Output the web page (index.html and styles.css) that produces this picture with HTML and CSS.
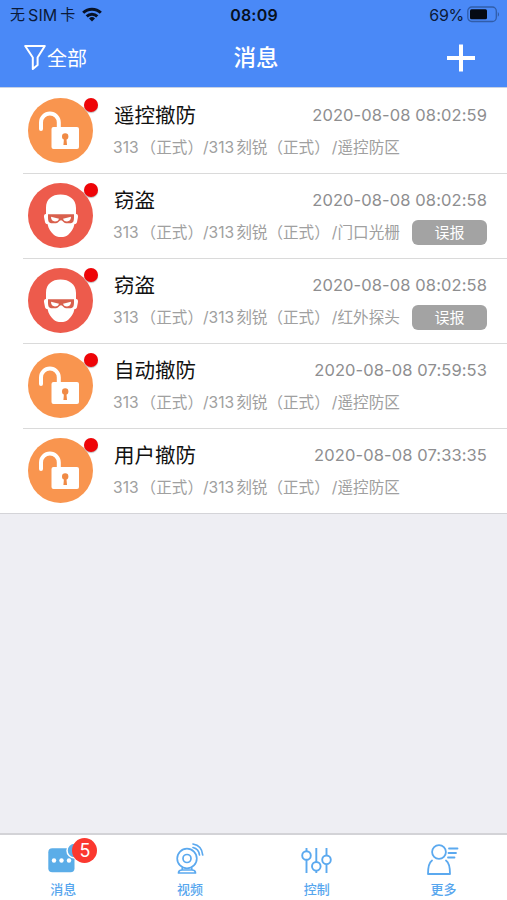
FILE: index.html
```html
<!DOCTYPE html>
<html lang="zh-CN">
<head>
<meta charset="utf-8">
<title>消息</title>
<link rel="stylesheet" href="styles.css">
</head>
<body>
<svg class="defs" width="0" height="0">
  <symbol id="unlock" viewBox="0 0 65 65">
    <circle cx="32.5" cy="32.5" r="32.5" fill="#f9954f"/>
    <path d="M13 31V24.500a8.900 8.900 0 0 1 17.800 0V31" fill="none" stroke="#fff" stroke-width="4" stroke-linecap="round"/>
    <rect x="23.500" y="29" width="27.500" height="22" rx="2" fill="#fff"/>
    <circle cx="37.200" cy="38.500" r="3.200" fill="#f08a45"/>
    <path d="M36.200 38h2l.8 9h-3.600z" fill="#f08a45"/>
  </symbol>
  <symbol id="thief" viewBox="0 0 65 65">
    <circle cx="32.5" cy="32.500" r="32.500" fill="#ed5b4c"/>
    <path d="M18 31V25C18 16 24 11.500 32.500 11.500S48 16 48 25v6c2 0 2.300 2 1.800 4l-.8 4c-.4 1.500-1 2-2.500 2-1 5-3.500 8-6 10.500C38.500 53.500 36 54 33 54s-5.500-.5-7.500-2.500C23 49 20.500 46 19.500 41c-1.500 0-2.100-.5-2.500-2l-.8-4C15.700 33 16 31 18 31z" fill="#fff"/>
    <path d="M20 31.300h26v3c0 4.500-1 6-4.500 6H38c-2.500 0-3-3-5-3s-2.500 3-5 3h-3.500c-3.500 0-4.500-1.500-4.500-6z" fill="#d9604d"/>
    <path d="M23 33.800l8 2c-1 2.300-2 2.600-4 2.600-2.500 0-4-1.500-4-4.600zM43 33.800l-8 2c1 2.300 2 2.600 4 2.600 2.500 0 4-1.500 4-4.600z" fill="#fff"/>
  </symbol>
</svg>
<div class="app">
  <header class="header">
    <div class="status">
      <div class="carrier"><span>无</span><span class="sim">SIM</span><span>卡</span>
        <svg class="wifi" width="20" height="15" viewBox="0 0 20 15" fill="none" stroke="#081226" stroke-width="3">
          <path d="M1.200 5.800a12.600 12.600 0 0 1 17.600 0"/><path d="M4.700 9.300a7.600 7.600 0 0 1 10.600 0"/>
          <path d="M10 14.500l-3-3a4.300 4.300 0 0 1 6 0z" fill="#081226" stroke="none"/>
        </svg>
      </div>
      <div class="clock">08:09</div>
      <div class="power"><span>69%</span>
        <svg width="33" height="17" viewBox="0 0 33 17">
          <rect x=".8" y="1" width="28.500" height="14.500" rx="4" fill="none" stroke="#315da9" stroke-width="1.300"/>
          <rect x="3" y="3.300" width="17" height="10" rx="1.500" fill="#050a14"/>
          <path d="M30.800 6c1.700.8 1.700 4 0 4.800z" fill="#315da9"/>
        </svg>
      </div>
    </div>
    <nav class="nav">
      <div class="filter">
        <svg width="22" height="27" viewBox="0 0 22 27" fill="none" stroke="#fff" stroke-width="2" stroke-linejoin="round"><path d="M1.200 2H20.800L13.600 13.500V21L8.800 25V13.500z"/></svg>
        <span>全部</span>
      </div>
      <h1>消息</h1>
      <svg class="add" width="28" height="28" viewBox="0 0 28 28" stroke="#fff" stroke-width="4"><path d="M0 14H28M14 .5V27.500"/></svg>
    </nav>
  </header>

  <main class="list">
    <article class="row">
      <div class="avatar"><svg width="65" height="65"><use href="#unlock"/></svg><i class="dot"></i></div>
      <div class="body">
        <div class="line"><h2>遥控撤防</h2><time>2020-08-08 08:02:59</time></div>
        <div class="line sub"><p><b>313</b>（正式）<b>/313</b>刻锐（正式）<b>/</b>遥控防区</p></div>
      </div>
    </article>
    <article class="row">
      <div class="avatar"><svg width="65" height="65"><use href="#thief"/></svg><i class="dot"></i></div>
      <div class="body">
        <div class="line"><h2>窃盗</h2><time>2020-08-08 08:02:58</time></div>
        <div class="line sub"><p><b>313</b>（正式）<b>/313</b>刻锐（正式）<b>/</b>门口光栅</p><span class="tag">误报</span></div>
      </div>
    </article>
    <article class="row">
      <div class="avatar"><svg width="65" height="65"><use href="#thief"/></svg><i class="dot"></i></div>
      <div class="body">
        <div class="line"><h2>窃盗</h2><time>2020-08-08 08:02:58</time></div>
        <div class="line sub"><p><b>313</b>（正式）<b>/313</b>刻锐（正式）<b>/</b>红外探头</p><span class="tag">误报</span></div>
      </div>
    </article>
    <article class="row">
      <div class="avatar"><svg width="65" height="65"><use href="#unlock"/></svg><i class="dot"></i></div>
      <div class="body">
        <div class="line"><h2>自动撤防</h2><time>2020-08-08 07:59:53</time></div>
        <div class="line sub"><p><b>313</b>（正式）<b>/313</b>刻锐（正式）<b>/</b>遥控防区</p></div>
      </div>
    </article>
    <article class="row">
      <div class="avatar"><svg width="65" height="65"><use href="#unlock"/></svg><i class="dot"></i></div>
      <div class="body">
        <div class="line"><h2>用户撤防</h2><time>2020-08-08 07:33:35</time></div>
        <div class="line sub"><p><b>313</b>（正式）<b>/313</b>刻锐（正式）<b>/</b>遥控防区</p></div>
      </div>
    </article>
  </main>

  <footer class="tabs">
    <div class="tab">
      <div class="icon">
        <svg width="36" height="36" viewBox="0 0 36 36">
          <rect x="3.300" y="8.300" width="26.200" height="24" rx="4" fill="#5bade8"/>
          <circle cx="29.500" cy="10.500" r="7.500" fill="#5bade8" stroke="#fff" stroke-width="1.500"/>
          <g fill="#fff"><circle cx="9" cy="20.500" r="2.200"/><circle cx="16.500" cy="20.500" r="2.200"/><circle cx="24" cy="20.500" r="2.200"/></g>
        </svg>
        <span class="badge">5</span>
      </div>
      <span class="label">消息</span>
    </div>
    <div class="tab">
      <div class="icon">
        <svg width="36" height="36" viewBox="0 0 36 36" fill="none" stroke="#5ba9ef" stroke-width="1.700" stroke-linecap="round" stroke-linejoin="round">
          <circle cx="15" cy="18.500" r="9.800"/><circle cx="15" cy="18.500" r="4"/>
          <path d="M10.500 27.500L10 30c-2.500 0-3.500 1-3.500 3h17c0-2-1-3-3.500-3l-.5-2.500M10 30h10M21 7.500c4 1 6 3.500 6.500 7.500M21 4c6 1 9.200 5 9.700 11"/>
        </svg>
      </div>
      <span class="label">视频</span>
    </div>
    <div class="tab">
      <div class="icon">
        <svg width="36" height="36" viewBox="0 0 36 36" fill="none" stroke="#5ba9ef" stroke-width="1.900">
          <path d="M7.500 8v3M7.500 20v13M17.300 8v14M17.300 30.500V33M27.500 8v7.500M27.500 24v9"/>
          <circle cx="7.500" cy="15.500" r="4.300"/><circle cx="17.300" cy="26.300" r="4.300"/><circle cx="27.500" cy="19.800" r="4.300"/>
        </svg>
      </div>
      <span class="label">控制</span>
    </div>
    <div class="tab">
      <div class="icon">
        <svg width="36" height="36" viewBox="0 0 36 36" fill="none" stroke="#5ba9ef" stroke-width="1.800" stroke-linecap="round" stroke-linejoin="round">
          <circle cx="13" cy="12" r="6.900"/>
          <path d="M6 20.500c-3 2-4 6-4 13.500H24c0-7.500-1-11.500-4-13.500M23 8.500h8.500M22.500 13h7.500M22 17.500h6.500"/>
        </svg>
      </div>
      <span class="label">更多</span>
    </div>
  </footer>
</div>
</body>
</html>
```
FILE: styles.css
```css
* { box-sizing: border-box; }
body { margin: 0; font-family: Inter, "Noto Sans CJK SC", sans-serif; }
h1, h2, p { margin: 0; font-weight: 400; }
svg { display: block; flex: none; }
.defs { position: absolute; }
.app { width: 507px; height: 900px; display: flex; flex-direction: column; background: #eeeef3; overflow: hidden; }

.header { height: 88px; flex: none; background: #4a89f7; border-bottom: 1px solid #c8d2e4; color: #fff; }
.status { height: 30px; padding: 0 9px 0 10px; display: grid; grid-template-columns: 1fr auto 1fr; align-items: center; color: #0b1a38; font-size: 16px; line-height: 30px; }
.carrier { display: flex; align-items: center; }
.carrier span:first-child, .sim + span { font-size: 15px; }
.sim { margin: 0 3px; letter-spacing: .1px; }
.wifi { margin: 0 0 2px 7px; }
.clock { font-weight: 600; color: #071020; letter-spacing: .2px; }
.power { display: flex; justify-content: flex-end; align-items: center; gap: 3px; margin-right: -2px; letter-spacing: -.3px; }
.power svg { margin-bottom: 1px; }
.nav { height: 55px; padding: 0 31px 0 24px; display: grid; grid-template-columns: 1fr auto 1fr; align-items: center; }
.filter { display: flex; align-items: center; gap: 1px; font-size: 20px; line-height: 30px; }
.filter span { padding-top: 2px; }
.nav h1 { font-size: 22.5px; line-height: 32px; font-weight: 500; margin: 1px -6px 0 6px; }
.add { justify-self: end; margin-right: 1px; }

.list { flex: none; padding-top: 1px; background: #fff; border-bottom: 1px solid #d4d4d8; }
.row { height: 85px; display: flex; margin-left: 23px; padding: 9px 20px 0 5px; border-bottom: 1px solid #dadada; }
.row:last-child { height: 84px; border-bottom: 0; }
.avatar { position: relative; width: 65px; height: 65px; flex: none; }
.dot { position: absolute; left: 56px; top: 0; width: 14px; height: 14px; border-radius: 50%; background: #ee0508; box-shadow: 0 1px 1px #bbb; }
.body { flex: 1; margin-left: 20px; }
.line { display: flex; justify-content: space-between; align-items: center; height: 34px; white-space: nowrap; }
.line h2 { font-size: 20.5px; line-height: 34px; color: #111; margin: 1px 0 0 1px; }
.line time { font-size: 16.5px; color: #8e8e90; letter-spacing: .1px; }
.sub { height: 31px; }
.sub p { font-size: 15.6px; line-height: 30px; margin-top: 1px; color: #a0a0a0; }
.sub b { font-weight: 400; padding-right: 2px; }
.sub b:last-child { padding: 0 0 0 2px; }
.tag { width: 75px; height: 25px; border-radius: 6px; background: #a3a3a3; color: #fff; font-size: 15px; line-height: 25px; text-align: center; }

.tabs { margin-top: auto; height: 67px; flex: none; display: grid; grid-template-columns: repeat(4, 1fr); background: #fff; border-top: 2px solid #d3d3d7; }
.tab { display: flex; flex-direction: column; align-items: center; padding-top: 5px; color: #57a6ee; }
.icon { position: relative; width: 36px; height: 36px; }
.badge { position: absolute; left: 27px; top: -2px; width: 25px; height: 25px; border-radius: 50%; background: #fb382f; color: #fff; font-size: 18px; line-height: 25px; text-align: center; }
.label { font-size: 13px; line-height: 18px; margin-top: 4px; font-weight: 500; }
```
